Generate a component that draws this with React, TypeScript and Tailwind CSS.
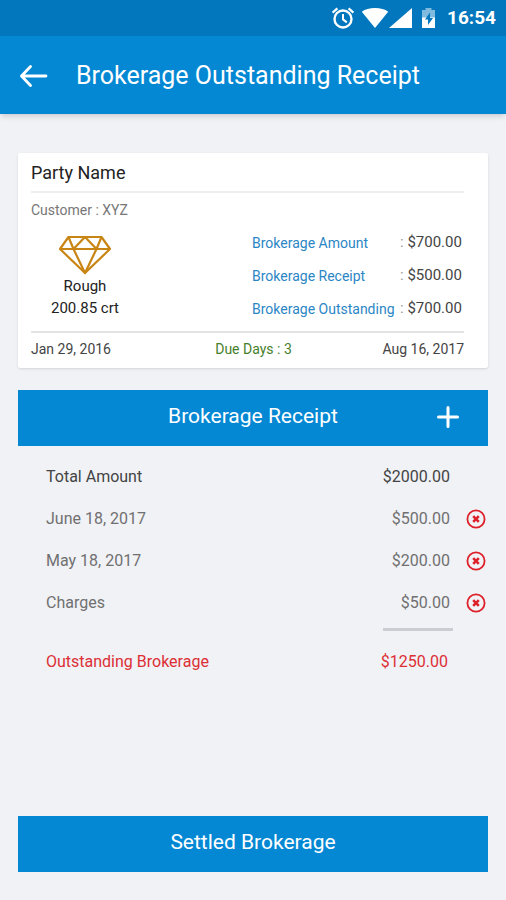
interface Receipt {
  label: string;
  amount: string;
}

const summary: Receipt[] = [
  { label: 'Brokerage Amount', amount: '$700.00' },
  { label: 'Brokerage Receipt', amount: '$500.00' },
  { label: 'Brokerage Outstanding', amount: '$700.00' },
];

const receipts: Receipt[] = [
  { label: 'June 18, 2017', amount: '$500.00' },
  { label: 'May 18, 2017', amount: '$200.00' },
  { label: 'Charges', amount: '$50.00' },
];

function StatusBar() {
  return (
    <div className="flex h-9 items-center justify-end bg-[#0277bd] pr-2.5 text-white">
      {/* Alarm */}
      <svg className="mr-1.5 h-6 w-6" viewBox="0 0 24 24" fill="none" stroke="currentColor">
        <circle cx="12" cy="13" r="8.5" strokeWidth="2.4" />
        <path d="M1.6 6.6 6.4 2.4M22.4 6.6 17.6 2.4" strokeWidth="2.2" />
        <path d="M12 8v5.4l3.8 3" strokeWidth="2" />
      </svg>
      {/* Wifi */}
      <svg className="h-5 w-7" viewBox="0 0 28 20" fill="currentColor">
        <path d="M14 20 .8 3.8C4 1.2 8.6 0 14 0s10 1.2 13.2 3.8z" />
      </svg>
      {/* Signal */}
      <svg className="mr-2 h-5 w-6" viewBox="0 0 24 20" fill="currentColor">
        <path d="M23 0v20H0z" />
      </svg>
      {/* Battery */}
      <svg className="mr-2.5 h-5 w-4" viewBox="0 0 16 20">
        <path d="M4.5 0h6v2h3.500v8H1V2h3.500z" fill="#7fbbde" />
        <path d="M1 9.500h13V20H1z" fill="currentColor" />
        <path d="M9 4.500 4 11.500h3V17l5-7H9z" fill="#0277bd" />
      </svg>
      <span className="text-[19px] font-bold">16:54</span>
    </div>
  );
}

function DiamondIcon() {
  return (
    <svg
      className="h-10 w-13"
      viewBox="0 0 52 40"
      fill="none"
      stroke="#c98514"
      strokeWidth="2.2"
      strokeLinejoin="round"
    >
      <path d="M9.5 2h33L51 14 26 38 1 14z" />
      <path d="M1 14h50" />
      <path d="M9.5 2 14.5 14 26 2l11.5 12 5-12" />
      <path d="M14.5 14 26 38l11.5-24" />
    </svg>
  );
}

function RemoveButton({ label }: { label: string }) {
  return (
    <button type="button" aria-label={`Remove ${label}`} className="block text-[#dd2029]">
      <svg className="h-5 w-5" viewBox="0 0 20 20" fill="none" stroke="currentColor">
        <circle cx="10" cy="10" r="8.6" strokeWidth="1.8" />
        <path d="m7.2 7.2 5.6 5.6M12.8 7.2l-5.6 5.6" strokeWidth="2.6" />
      </svg>
    </button>
  );
}

export default function App() {
  return (
    <div className="flex min-h-screen flex-col bg-[#f0f2f6] font-[Roboto,sans-serif] text-[#444]">
      <StatusBar />

      <header className="flex h-[78px] items-center bg-[#0488d4] pt-0.5 pl-5 text-white shadow-md">
        <button type="button" aria-label="Back" className="mr-7">
          <svg
            className="h-7 w-7"
            viewBox="0 0 28 28"
            fill="none"
            stroke="currentColor"
            strokeWidth="2.8"
            strokeLinecap="round"
            strokeLinejoin="round"
          >
            <path d="M26 14H2M10.5 4.5 1.5 14l9 9.5" />
          </svg>
        </button>
        <h1 className="text-[25px]">Brokerage Outstanding Receipt</h1>
      </header>

      <main className="flex flex-1 flex-col px-[18px] pt-[39px] pb-7">
        {/* Party card */}
        <section className="rounded-xs bg-white pr-6 pl-[13px] shadow-sm">
          <h2 className="border-b-2 border-[#eeeeee] pt-1.5 pb-1 text-lg leading-7 text-[#222]">
            Party Name
          </h2>
          <p className="pt-1.5 text-sm leading-[22px] text-[#777]">Customer : XYZ</p>

          <div className="flex items-start justify-between pb-1.5">
            <div className="flex w-27 flex-col items-center pt-3.5 text-[15px] leading-[22px] text-[#222]">
              <DiamondIcon />
              <span>Rough</span>
              <span>200.85 crt</span>
            </div>
            <dl className="w-53 pt-[5px]">
              {summary.map((item) => (
                <div key={item.label} className="flex h-[33px] items-center justify-between whitespace-nowrap">
                  <dt className="text-sm text-[#2b86c5]">{item.label}</dt>
                  <dd className="w-16 text-[15px]">
                    <span className="text-[#999]">:</span> {item.amount}
                  </dd>
                </div>
              ))}
            </dl>
          </div>

          <div className="grid grid-cols-[1fr_auto_1fr] border-t-2 border-[#e4e4e4] pt-1 pb-[7px] text-sm leading-6">
            <span>Jan 29, 2016</span>
            <span className="pl-3 text-[#45802b]">Due Days : 3</span>
            <span className="text-right">Aug 16, 2017</span>
          </div>
        </section>

        {/* Receipts */}
        <div className="mt-[22px] grid h-14 grid-cols-[1fr_auto_1fr] items-center bg-[#0488d4] pb-0.5 text-white">
          <h2 className="col-start-2 text-[21px]">Brokerage Receipt</h2>
          <button type="button" aria-label="Add receipt" className="mr-7 justify-self-end">
            <svg className="h-6 w-6" viewBox="0 0 24 24" stroke="currentColor" strokeWidth="3" strokeLinecap="round">
              <path d="M12 2.5v19M2.5 12h19" />
            </svg>
          </button>
        </div>

        <table className="mt-2.5 w-full text-base text-[#707070]">
          <tbody>
            <tr className="h-[42px] text-[#444]">
              <th scope="row" className="pl-7 text-left font-normal">Total Amount</th>
              <td className="text-right">$2000.00</td>
              <td className="w-[38px]" />
            </tr>
            {receipts.map((item) => (
              <tr key={item.label} className="h-[42px]">
                <th scope="row" className="pl-7 text-left font-normal">{item.label}</th>
                <td className="text-right">{item.amount}</td>
                <td className="pl-4">
                  <RemoveButton label={item.label} />
                </td>
              </tr>
            ))}
          </tbody>
        </table>
        <hr className="mt-1 mr-[35px] w-[70px] self-end border-t-3 border-[#cccdd2]" />
        <div className="mt-2.5 flex h-[42px] items-center justify-between pr-10 pl-7 text-base text-[#dd2f35]">
          <span>Outstanding Brokerage</span>
          <span>$1250.00</span>
        </div>

        <button type="button" className="mt-auto h-14 w-full bg-[#0488d4] pb-0.5 text-[21px] text-white">
          Settled Brokerage
        </button>
      </main>
    </div>
  );
}
